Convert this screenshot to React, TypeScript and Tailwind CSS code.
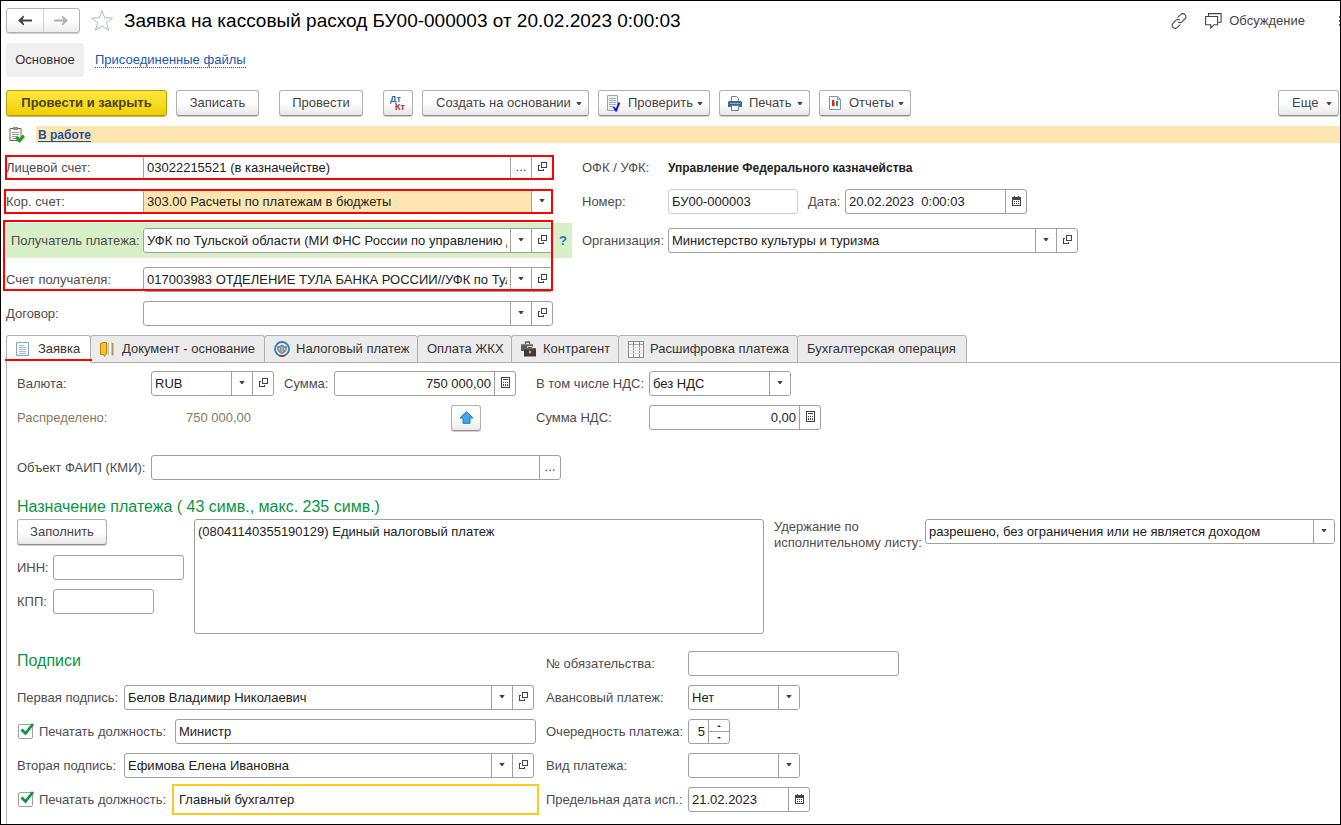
import React from "react";
import clsx from "clsx";

const BORDER = "border-[#a0a0a0]";

/* ---------- small glyphs ---------- */

function Caret({ className }: { className?: string }) {
  return (
    <svg width="6" height="3" viewBox="0 0 6 3" className={clsx("shrink-0", className)} aria-hidden="true">
      <path d="M0.3 0h5.4L3.600 3H2.400z" fill="#444" />
    </svg>
  );
}

function OpenIcon() {
  return (
    <svg width="9" height="9" viewBox="0 0 9 9" fill="none" stroke="#444" shapeRendering="crispEdges" aria-hidden="true">
      <path d="M3.5 0.5h5v5h-5z" />
      <path d="M2 3.5H0.5v5h5V7" />
    </svg>
  );
}

function CalendarIcon() {
  return (
    <svg width="9" height="10" viewBox="0 0 9 10" shapeRendering="crispEdges" aria-hidden="true">
      <path d="M0 1h9v3H0zM2 0h1v1H2zM6 0h1v1H6z" fill="#444" />
      <path d="M0.5 3.5v6h8v-6" fill="none" stroke="#444" />
      <path d="M2 5h1v1H2zM4 5h1v1H4zM6 5h1v1H6zM2 7h1v1H2zM4 7h1v1H4zM6 7h1v1H6z" fill="#444" />
    </svg>
  );
}

function CalculatorIcon() {
  return (
    <svg width="9" height="11" viewBox="0 0 9 11" shapeRendering="crispEdges" aria-hidden="true">
      <path d="M0.5 0.5h8v10h-8z" fill="none" stroke="#444" />
      <path d="M2 2h5v1H2zM2 5h1v1H2zM4 5h1v1H4zM6 5h1v1H6zM2 7h1v1H2zM4 7h1v1H4zM6 7h1v2H6zM2 8h1v1H2zM4 8h1v1H4z" fill="#444" />
    </svg>
  );
}

function ArrowIcon({ flip, color }: { flip?: boolean; color: string }) {
  return (
    <svg width="14" height="11" viewBox="0 0 14 11" className={clsx(flip && "rotate-180")} aria-hidden="true">
      <path d="M0 5.5L5.5 0.5L6.2 1.6L4.6 4.4H14V6.6H4.6L6.2 9.4L5.5 10.5z" fill={color} />
    </svg>
  );
}

function StarIcon() {
  return (
    <svg width="24" height="23" viewBox="0 0 24 23" fill="none" stroke="#b4b8bd" aria-hidden="true">
      <path d="M12 1.5L14.7 8.8L22.5 9L16.4 13.8L18.6 21.3L12 16.9L5.4 21.3L7.6 13.8L1.5 9L9.3 8.8z" />
    </svg>
  );
}

function LinkIcon() {
  return (
    <svg width="16" height="16" viewBox="0 0 16 16" fill="none" stroke="#555" strokeWidth="1.2" strokeLinecap="round" aria-hidden="true">
      <path d="M7 4.2L9.6 1.6a2.9 2.9 0 0 1 4.4 0a2.9 2.9 0 0 1 0 4.2L11 8.8a2.9 2.9 0 0 1-3.6.4" />
      <path d="M9 11.8L6.4 14.4a2.9 2.9 0 0 1-4.4 0a2.9 2.9 0 0 1 0-4.2L5 7.2a2.9 2.9 0 0 1 3.6-.4" />
    </svg>
  );
}

function ChatIcon() {
  return (
    <svg width="17" height="16" viewBox="0 0 17 16" fill="none" stroke="#444" strokeWidth="1.1" aria-hidden="true">
      <path d="M0.6 3.5h12v8.2H9.2L5.8 15v-3.3H0.6z" />
      <path d="M3.5 3V0.6h12.6v8.7h-3" />
    </svg>
  );
}

function ClipboardIcon() {
  return (
    <svg width="16" height="16" viewBox="0 0 16 16" aria-hidden="true">
      <path d="M1 1.5h11v12H1z" fill="#fff" stroke="#8b5a50" />
      <path d="M4 0h5v3H4z" fill="#8a8f96" />
      <path d="M3 5.5h7M3 7.5h7M3 9.5h5M3 11.5h4" stroke="#9aa0a8" />
      <path d="M6.5 11l2.5-1.5 1.6 2L14 8l1.5 2-5 5.5z" fill="#15a815" stroke="#0a7d12" strokeWidth="0.6" />
    </svg>
  );
}

function CheckDocIcon() {
  return (
    <svg width="15" height="17" viewBox="0 0 15 17" aria-hidden="true">
      <path d="M0.5 0.5h10v15h-10z" fill="#eef1f6" stroke="#9aa3b5" />
      <path d="M2 3.5h7M2 5.5h7M2 7.5h7M2 9.5h7M2 11.5h5" stroke="#a7afbf" />
      <path d="M6.5 12l2.5 3.5L12.5 7.5" fill="none" stroke="#1414dc" strokeWidth="1.9" />
    </svg>
  );
}

function PrinterIcon() {
  return (
    <svg width="14" height="15" viewBox="0 0 14 15" aria-hidden="true">
      <path d="M3.5 5.5v-5h5l2 2v3" fill="#fff" stroke="#6c7f92" />
      <path d="M1 5h12l1 1v5H0V6z" fill="#3a6a98" />
      <path d="M2 7.5h10" stroke="#8fb0cf" />
      <path d="M3.5 9.5h7v5h-7z" fill="#fff" stroke="#6c7f92" />
    </svg>
  );
}

function ReportIcon() {
  return (
    <svg width="12" height="14" viewBox="0 0 12 14" aria-hidden="true">
      <path d="M0.5 0.5h8l3 3v10h-11z" fill="#fff" stroke="#7f94a8" />
      <path d="M8.5 0.5v3h3" fill="none" stroke="#7f94a8" />
      <path d="M3 4h2v6H3z" fill="#e02020" />
      <path d="M5 6h1v4H5z" fill="#f08080" />
      <path d="M7 5h2v5H7z" fill="#1c9a2c" />
    </svg>
  );
}

function PageIcon() {
  return (
    <svg width="13" height="14" viewBox="0 0 13 14" aria-hidden="true">
      <path d="M0.5 0.5h12v13h-12z" fill="#f3f8fb" stroke="#8ca3b4" />
      <path d="M3 3.5h5M3 5.5h7M3 7.5h7M3 9.5h7M3 11.5h7" stroke="#a9bccb" />
    </svg>
  );
}

function FoldersIcon() {
  return (
    <svg width="14" height="15" viewBox="0 0 14 15" aria-hidden="true">
      <path d="M0.5 1.5L3 0.5H6.5v11L4.5 14.5L3.5 12.5H0.5z" fill="#f6bf2e" stroke="#b98216" />
      <path d="M8.5 1v12" stroke="#c9b48a" strokeWidth="1.5" />
      <path d="M10 1v12" stroke="#fff" strokeWidth="1.5" />
      <path d="M12.5 1v12.500" stroke="#b3935a" strokeWidth="2" />
    </svg>
  );
}

function EmblemIcon() {
  return (
    <svg width="16" height="16" viewBox="0 0 16 16" aria-hidden="true">
      <circle cx="8" cy="8" r="7" fill="#e9f3fa" stroke="#2d7fc0" strokeWidth="1.8" />
      <path d="M3.5 5L6 5.500l1-1.500h2l1 1.500L12.500 5l.2 3.500-1.700 2.500L8 13 5 11 3.300 8.500z" fill="#8b8f96" stroke="#6b6f78" strokeWidth="0.5" />
      <path d="M8 6v5M5.500 7v2M10.500 7v2" stroke="#d0d4d8" />
      <path d="M5.5 14.800a7 7 0 0 0 5 0" stroke="#d22" strokeWidth="1.6" fill="none" />
    </svg>
  );
}

function CasesIcon() {
  return (
    <svg width="15" height="16" viewBox="0 0 15 16" aria-hidden="true">
      <path d="M4.5 3V1h4v2" fill="none" stroke="#6b5b45" strokeWidth="1.3" />
      <path d="M0 3h12v7H0z" fill="#5d5d5d" />
      <path d="M0 3h12v1.200H0z" fill="#858585" />
      <path d="M6.5 7V5.500h5V7" fill="none" stroke="#d9d0c0" />
      <path d="M3 7h12v8.500H3z" fill="#3f3b38" />
      <path d="M3 7h12v1.300H3z" fill="#6e6862" />
      <path d="M9 9l1.500 2L9 13l-1.500-2z" fill="#f3a32a" />
    </svg>
  );
}

function TableIcon() {
  return (
    <svg width="16" height="17" viewBox="0 0 16 17" shapeRendering="crispEdges" aria-hidden="true">
      <path d="M0.5 0.5h15v16h-15z" fill="#f8f8f8" stroke="#858b88" />
      <path d="M1 3.5h14" stroke="#a4aaa7" />
      <path d="M5.5 1v15M11.5 1v15" stroke="#858b88" />
      <path d="M2 6.5h12M2 9.5h12M2 12.5h12" stroke="#dcdcdc" />
    </svg>
  );
}

function UpArrowIcon() {
  return (
    <svg width="15" height="13" viewBox="0 0 15 13" aria-hidden="true">
      <path d="M7.5 0.700L14 7H11v5.300H4V7H1z" fill="#3fa9e8" stroke="#2478b0" />
    </svg>
  );
}

function DtKtIcon() {
  return (
    <svg width="16" height="18" viewBox="0 0 16 18" fontFamily='"Liberation Sans", Arial, sans-serif' fontWeight="700" fontSize="9" aria-hidden="true">
      <text x="0" y="8" fill="#2a6d9e">Дт</text>
      <text x="5" y="16" fill="#c42a1c">Кт</text>
    </svg>
  );
}

/* ---------- form parts ---------- */

function Tool({
  children,
  className = "justify-center",
  label,
}: {
  children: React.ReactNode;
  className?: string;
  label?: string;
}) {
  return (
    <button
      type="button"
      aria-label={label}
      className={clsx(
        "flex h-[26px] shrink-0 items-center rounded-[3px] border border-[#b0b0b0] border-b-[#8f8f8f] bg-linear-to-b from-white from-50% to-[#e8e8e8] text-[#444] shadow-[0_1px_0_#d0d0d0]",
        className,
      )}
    >
      {children}
    </button>
  );
}

function IconTool({ icon, text, className }: { icon: React.ReactNode; text: string; className: string }) {
  return (
    <Tool className={clsx("ml-[9px] pr-[6px] pl-[7px]", className)}>
      <span className="mr-[6px] flex w-4 justify-center">{icon}</span>
      {text}
      <Caret className="ml-auto" />
    </Tool>
  );
}

type Addon = "drop" | "open" | "dots" | "calendar" | "calc";

const ADDON_NAME: Record<Addon, string> = {
  drop: "Выбрать из списка",
  open: "Открыть",
  dots: "Выбрать",
  calendar: "Календарь",
  calc: "Калькулятор",
};

function AddonGlyph({ kind }: { kind: Addon }) {
  if (kind === "drop") return <Caret />;
  if (kind === "open") return <OpenIcon />;
  if (kind === "calendar") return <CalendarIcon />;
  if (kind === "calc") return <CalculatorIcon />;
  return <span>...</span>;
}

function Field({
  id,
  value = "",
  addons = [],
  className,
  tone = BORDER,
  right,
}: {
  id: string;
  value?: string;
  addons?: Addon[];
  className?: string;
  tone?: string;
  right?: boolean;
}) {
  return (
    <div className={clsx("flex h-[25px] shrink-0 border bg-white", tone, className)}>
      <input
        id={id}
        type="text"
        defaultValue={value}
        className={clsx("min-w-0 flex-1 bg-transparent px-[3px] text-[#222] outline-none", right && "text-right")}
      />
      {addons.map((a) => (
        <button
          key={a}
          type="button"
          aria-label={ADDON_NAME[a]}
          className={clsx("flex w-[21px] shrink-0 items-center justify-center border-l pb-0.5 text-[#444]", BORDER)}
        >
          <AddonGlyph kind={a} />
        </button>
      ))}
    </div>
  );
}

function Select({ id, value, className }: { id: string; value: string; className?: string }) {
  return (
    <div className={clsx("grid h-[25px] grid-cols-[minmax(0,1fr)_21px] rounded-[3px] border", BORDER, className)}>
      <select
        id={id}
        defaultValue={value}
        className="col-span-2 col-start-1 row-start-1 min-w-0 appearance-none bg-transparent pr-[24px] pl-[3px] text-[#222] outline-none"
      >
        <option>{value}</option>
      </select>
      <span
        className={clsx(
          "pointer-events-none col-start-2 row-start-1 flex items-center justify-center rounded-r-[2px] border-l bg-white pb-0.5",
          BORDER,
        )}
      >
        <Caret />
      </span>
    </div>
  );
}

function Label({ id, children, className }: { id: string; children: React.ReactNode; className?: string }) {
  return (
    <label htmlFor={id} className={clsx("shrink-0 whitespace-nowrap text-[#4d4d4d]", className)}>
      {children}
    </label>
  );
}

function Frame({ className }: { className: string }) {
  return <span aria-hidden="true" className={clsx("pointer-events-none absolute border-2 border-[#ff0000]", className)} />;
}

function Tick({ id }: { id: string }) {
  return (
    <span className="relative ml-px size-[15px] shrink-0">
      <input id={id} type="checkbox" defaultChecked className="peer block size-[15px] appearance-none rounded-[2px] border border-[#a0a0a0] bg-white" />
      <svg width="15" height="14" viewBox="0 0 15 14" className="pointer-events-none absolute -top-px left-[2px] hidden peer-checked:block" aria-hidden="true">
        <path d="M1.5 6.500L5.500 10.500L13 1" fill="none" stroke="#0b9444" strokeWidth="2.8" />
      </svg>
    </span>
  );
}

const TABS: { name: string; width: string; icon?: React.ReactNode }[] = [
  { name: "Заявка", width: "w-[85px]", icon: <PageIcon /> },
  { name: "Документ - основание", width: "w-[175px]", icon: <FoldersIcon /> },
  { name: "Налоговый платеж", width: "w-[154px]", icon: <EmblemIcon /> },
  { name: "Оплата ЖКХ", width: "w-[95px]" },
  { name: "Контрагент", width: "w-[108px]", icon: <CasesIcon /> },
  { name: "Расшифровка платежа", width: "w-[180px]", icon: <TableIcon /> },
  { name: "Бухгалтерская операция", width: "w-[170px]" },
];

/* ---------- sections ---------- */

function TitleBar() {
  return (
    <header className="flex items-center pt-[7px] pl-[5px]">
      <div className="flex h-[25px] w-[74px] rounded-[3px] border border-[#b0b0b0] bg-linear-to-b from-white from-50% to-[#ececec] shadow-[0_1px_0_#d0d0d0]">
        <button type="button" aria-label="Назад" className="flex flex-1 items-center justify-center border-r border-[#d0d0d0]">
          <ArrowIcon color="#444" />
        </button>
        <button type="button" aria-label="Вперед" className="flex flex-1 items-center justify-center">
          <ArrowIcon color="#b0b0b0" flip />
        </button>
      </div>
      <button type="button" aria-label="Избранное" className="ml-[10px]">
        <StarIcon />
      </button>
      <h1 className="ml-[10px] text-[19px] leading-6 text-black">Заявка на кассовый расход БУ00-000003 от 20.02.2023 0:00:03</h1>
      <div className="ml-auto flex items-center text-[#444]">
        <button type="button" aria-label="Ссылка">
          <LinkIcon />
        </button>
        <button type="button" className="ml-[18px] flex items-center gap-[7px]">
          <ChatIcon />
          Обсуждение
        </button>
        <button type="button" aria-label="Дополнительно" className="ml-[34px]">
          <svg width="1" height="12" viewBox="0 0 1 12" fill="#666" aria-hidden="true">
            <path d="M0 1h1v2H0zM0 5h1v2H0zM0 9h1v2H0z" />
          </svg>
        </button>
      </div>
    </header>
  );
}

function Toolbar() {
  return (
    <div className="mt-[13px] flex items-center pr-px pl-[5px]">
      <button
        type="button"
        className="h-[26px] w-[161px] shrink-0 rounded-[3px] border border-[#b39b00] bg-linear-to-b from-[#ffe838] to-[#f0cf00] font-bold text-[#4a4422] shadow-[0_1px_0_#c8b868]"
      >
        Провести и закрыть
      </button>
      <Tool className="ml-[9px] w-[83px] justify-center">Записать</Tool>
      <Tool className="ml-[20px] w-[84px] justify-center">Провести</Tool>
      <Tool className="ml-[20px] w-[30px] justify-center" label="Дебет и кредит">
        <DtKtIcon />
      </Tool>
      <Tool className="ml-[9px] w-[167px] pr-[6px] pl-[13px]">
        Создать на основании
        <Caret className="ml-auto" />
      </Tool>
      <IconTool icon={<CheckDocIcon />} text="Проверить" className="w-[112px]" />
      <IconTool icon={<PrinterIcon />} text="Печать" className="w-[91px]" />
      <IconTool icon={<ReportIcon />} text="Отчеты" className="w-[92px]" />
      <Tool className="ml-auto w-[61px] pr-[6px] pl-[13px]">
        Еще
        <Caret className="ml-auto" />
      </Tool>
    </div>
  );
}

function Requisites() {
  return (
    <section className="mt-[12px] flex flex-col gap-[9px] pl-[5px]">
      <div className="relative flex items-center">
        <Label id="account" className="w-[137px]">Лицевой счет:</Label>
        <Field id="account" value="03022215521 (в казначействе)" addons={["dots", "open"]} className="w-[410px] rounded-[3px]" />
        <Frame className="inset-y-0 -left-px w-[549px]" />
        <span className="ml-[29px] w-[86px] text-[#4d4d4d]">ОФК / УФК:</span>
        <strong className="text-xs text-[#222]">Управление Федерального казначейства</strong>
      </div>
      <div className="relative flex items-center">
        <Label id="corr" className="w-[137px]">Кор. счет:</Label>
        <Select id="corr" value="303.00 Расчеты по платежам в бюджеты" className="w-[410px] bg-[#ffe6b1]" />
        <Frame className="inset-y-0 -left-0.5 w-[549px]" />
        <Label id="number" className="ml-[29px] w-[86px]">Номер:</Label>
        <Field id="number" value="БУ00-000003" tone="border-[#d0d0d0]" className="w-[130px] rounded-[3px]" />
        <Label id="date" className="ml-[10px] w-[37px]">Дата:</Label>
        <Field id="date" value="20.02.2023  0:00:03" addons={["calendar"]} className="w-[182px] rounded-[3px]" />
      </div>
      <div className="relative flex flex-col gap-[9px]">
        <div className="flex items-center">
          <div className="flex h-[35px] w-[566px] items-center bg-[#d8f0c8] pl-[5px]">
            <Label id="payee" className="w-[132px]">Получатель платежа:</Label>
            <Field
              id="payee"
              value="УФК по Тульской области (МИ ФНС России по управлению долгом)"
              addons={["drop", "open"]}
              className="w-[410px] rounded-[3px]"
            />
            <button type="button" className="ml-[6px] font-bold text-[#1a7ab8]">?</button>
          </div>
          <Label id="org" className="ml-[10px] w-[86px]">Организация:</Label>
          <Field id="org" value="Министерство культуры и туризма" addons={["drop", "open"]} className="w-[410px] rounded-[3px]" />
        </div>
        <div className="flex items-center">
          <Label id="payeeAccount" className="w-[137px]">Счет получателя:</Label>
          <Field
            id="payeeAccount"
            value="017003983 ОТДЕЛЕНИЕ ТУЛА БАНКА РОССИИ//УФК по Тульской области"
            addons={["drop", "open"]}
            className="w-[410px] rounded-[3px]"
          />
        </div>
        <Frame className="-top-[3px] bottom-px -left-[3px] w-[550px]" />
      </div>
      <div className="flex items-center">
        <Label id="contract" className="w-[137px]">Договор:</Label>
        <Field id="contract" addons={["drop", "open"]} className="w-[410px] rounded-[3px]" />
      </div>
    </section>
  );
}

function Tabs() {
  return (
    <div role="tablist" className="relative mt-[9px] -mb-px ml-[5px] flex">
      {TABS.map((t, i) => (
        <button
          key={t.name}
          type="button"
          role="tab"
          aria-selected={i === 0}
          className={clsx(
            "relative flex h-[28px] shrink-0 items-center rounded-t-[3px] border border-[#b0b0b0] pl-[9px] whitespace-nowrap text-[#333]",
            t.width,
            i === 0 ? "z-10 border-b-white bg-white" : "-ml-px bg-[#ebebeb]",
          )}
        >
          {t.icon && <span className="w-[22px] shrink-0">{t.icon}</span>}
          {t.name}
          {i === 0 && <span aria-hidden="true" className="absolute -inset-x-0.5 bottom-px h-0.5 bg-[#ff0000]" />}
        </button>
      ))}
    </div>
  );
}

function Amounts() {
  return (
    <div className="flex flex-col gap-[9px]">
      <div className="flex items-center">
        <Label id="currency" className="w-[134px]">Валюта:</Label>
        <Field id="currency" value="RUB" addons={["drop", "open"]} className="w-[123px] rounded-[3px]" />
        <Label id="sum" className="ml-[10px] w-[50px]">Сумма:</Label>
        <Field id="sum" value="750 000,00" addons={["calc"]} right className="w-[182px] rounded-[3px]" />
        <Label id="vat" className="ml-[20px] w-[113px]">В том числе НДС:</Label>
        <Select id="vat" value="без НДС" className="w-[142px]" />
      </div>
      <div className="flex items-center">
        <span className="w-[134px] text-[#857a62]">Распределено:</span>
        <span className="w-[100px] text-right text-[#857a62]">750 000,00</span>
        <Tool label="Заполнить сумму" className="-my-px ml-[200px] w-[30px] justify-center">
          <UpArrowIcon />
        </Tool>
        <Label id="vatSum" className="ml-[55px] w-[113px]">Сумма НДС:</Label>
        <Field id="vatSum" value="0,00" addons={["calc"]} right className="w-[172px] rounded-[3px]" />
      </div>
      <div className="mt-4 flex items-center">
        <Label id="object" className="w-[134px]">Объект ФАИП (КМИ):</Label>
        <Field id="object" addons={["dots"]} className="w-[410px] rounded-[3px]" />
      </div>
    </div>
  );
}

function Purpose() {
  return (
    <div>
      <h2 className="mt-4 pb-0.5 text-base leading-[21px] text-[#0b9444]">Назначение платежа ( 43 симв., макс. 235 симв.)</h2>
      <div className="flex items-start">
        <div className="flex w-[177px] shrink-0 flex-col gap-[9px]">
          <Tool className="mb-px w-[90px] justify-center">Заполнить</Tool>
          <div className="flex items-center">
            <Label id="inn" className="w-[36px]">ИНН:</Label>
            <Field id="inn" className="w-[131px] rounded-[3px]" />
          </div>
          <div className="flex items-center">
            <Label id="kpp" className="w-[36px]">КПП:</Label>
            <Field id="kpp" className="w-[101px] rounded-[3px]" />
          </div>
        </div>
        <textarea
          aria-label="Назначение платежа"
          defaultValue="(08041140355190129) Единый налоговый платеж"
          className="block h-[115px] w-[570px] shrink-0 resize-none rounded-[3px] border border-[#a0a0a0] bg-white px-[3px] py-1 text-[#222] outline-none"
        />
        <Label id="deduct" className="ml-[10px] w-[151px] leading-4">
          Удержание по
          <br />
          исполнительному листу:
        </Label>
        <Select id="deduct" value="разрешено, без ограничения или не является доходом" className="min-w-0 flex-1 bg-white" />
      </div>
    </div>
  );
}

function Signatures() {
  return (
    <div className="mt-[17px] flex gap-[10px]">
      <div className="flex w-[519px] shrink-0 flex-col gap-[9px]">
        <h2 className="h-[25px] text-base leading-[19px] text-[#0b9444]">Подписи</h2>
        <div className="flex items-center">
          <Label id="sign1" className="w-[107px]">Первая подпись:</Label>
          <Field id="sign1" value="Белов Владимир Николаевич" addons={["drop", "open"]} className="w-[410px] rounded-[3px]" />
        </div>
        <div className="flex items-center">
          <Tick id="print1" />
          <Label id="print1" className="ml-[6px] w-[136px]">Печатать должность:</Label>
          <Field id="post1" value="Министр" className="w-[361px] rounded-[3px]" />
        </div>
        <div className="flex items-center">
          <Label id="sign2" className="w-[107px]">Вторая подпись:</Label>
          <Field id="sign2" value="Ефимова Елена Ивановна" addons={["drop", "open"]} className="w-[410px] rounded-[3px]" />
        </div>
        <div className="flex items-center">
          <Tick id="print2" />
          <Label id="print2" className="ml-[6px] w-[136px]">Печатать должность:</Label>
          <Field
            id="post2"
            value="Главный бухгалтер"
            tone="border-white"
            className="w-[361px] outline-2 outline-offset-1 outline-[#fbcb1e]"
          />
        </div>
      </div>
      <div className="flex flex-col gap-[9px]">
        <div className="flex items-center">
          <Label id="obligation" className="w-[142px]">№ обязательства:</Label>
          <Field id="obligation" className="w-[211px] rounded-[3px]" />
        </div>
        <div className="flex items-center">
          <Label id="advance" className="w-[142px]">Авансовый платеж:</Label>
          <Select id="advance" value="Нет" className="w-[112px]" />
        </div>
        <div className="flex items-center">
          <Label id="order" className="w-[142px]">Очередность платежа:</Label>
          <div className="flex h-[25px] w-[42px] rounded-[3px] border border-[#a0a0a0]">
            <input
              id="order"
              type="text"
              inputMode="numeric"
              defaultValue="5"
              className="min-w-0 flex-1 bg-transparent px-[3px] text-right text-[#222] outline-none"
            />
            <div className="flex w-[21px] flex-col border-l border-[#a0a0a0]">
              <button type="button" aria-label="Увеличить" className="flex flex-1 items-center justify-center border-b border-[#a0a0a0]">
                <svg width="4" height="2" viewBox="0 0 4 2" aria-hidden="true">
                  <path d="M0 2L2 0L4 2z" fill="#333" />
                </svg>
              </button>
              <button type="button" aria-label="Уменьшить" className="flex flex-1 items-center justify-center">
                <svg width="4" height="2" viewBox="0 0 4 2" aria-hidden="true">
                  <path d="M0 0L2 2L4 0z" fill="#333" />
                </svg>
              </button>
            </div>
          </div>
        </div>
        <div className="flex items-center">
          <Label id="kind" className="w-[142px]">Вид платежа:</Label>
          <Select id="kind" value="" className="w-[112px]" />
        </div>
        <div className="flex items-center">
          <Label id="deadline" className="w-[142px]">Предельная дата исп.:</Label>
          <Field id="deadline" value="21.02.2023" addons={["calendar"]} className="w-[122px] rounded-[3px]" />
        </div>
      </div>
    </div>
  );
}

export default function App() {
  return (
    <main className="flex min-h-screen flex-col overflow-hidden border border-black bg-white font-['Liberation_Sans',Arial,sans-serif] text-[13px] leading-4">
      <TitleBar />
      <nav className="mt-[10px] flex items-center pl-[5px]">
        <a href="#main" className="flex h-[34px] w-[78px] items-center justify-center rounded-[3px] bg-[#f0f0f0] text-[#333]">
          Основное
        </a>
        <a href="#files" className="ml-[11px] border-b border-dotted border-[#2058b0] leading-[14px] text-[#2058b0]">
          Присоединенные файлы
        </a>
      </nav>
      <Toolbar />
      <div className="mt-[10px] flex items-center pl-2">
        <ClipboardIcon />
        <div className="ml-[11px] h-[17px] flex-1 bg-[#ffe6b1] pl-0.5">
          <a href="#status" className="block w-fit text-xs leading-[18px] font-bold text-[#1f4e9e] underline underline-offset-2">
            В работе
          </a>
        </div>
      </div>
      <Requisites />
      <Tabs />
      <section className="ml-[5px] flex-1 border-t border-l border-[#b0b0b0] pt-2 pr-[5px] pb-3 pl-[10px]">
        <Amounts />
        <Purpose />
        <Signatures />
      </section>
    </main>
  );
}
